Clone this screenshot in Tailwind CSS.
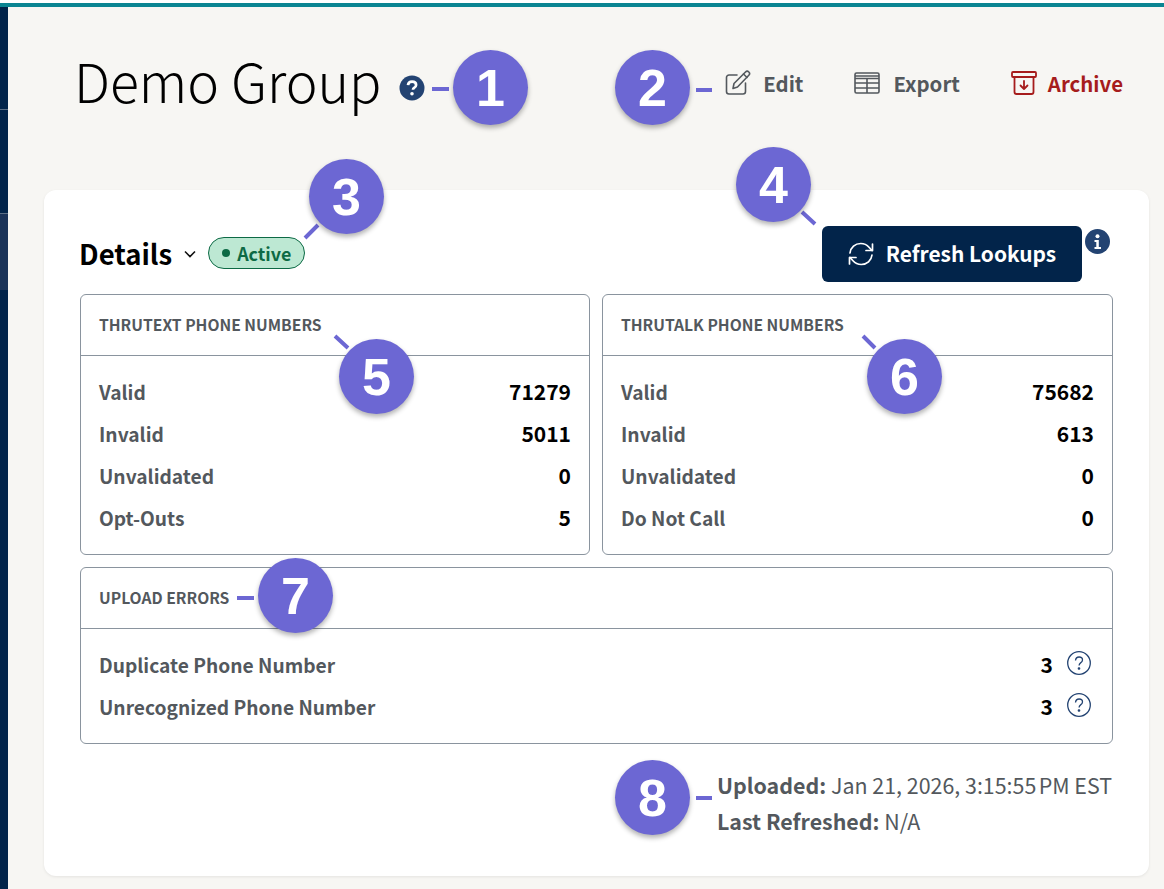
<!DOCTYPE html>
<html lang="en">
<head>
    <meta charset="UTF-8">
    <title>Demo Group</title>
    <script src="https://cdn.jsdelivr.net/npm/@tailwindcss/browser@4"></script>
</head>
<body class="bg-[#f7f6f3] font-['Noto_Sans_CJK_JP','Noto_Sans',sans-serif] antialiased">
<div class="relative w-[1164px] h-[889px] overflow-hidden">
    <div class="h-[3px] bg-white"></div>
    <div class="h-1 bg-[#0b8592]"></div>
    <div class="flex h-[882px]">
        <!-- sidebar -->
        <aside class="w-2 shrink-0 flex flex-col bg-[#02244a]">
            <div class="h-[103px] border-b border-[#5c6f86]"></div>
            <div class="h-[104px] border-b border-[#5c6f86]"></div>
            <div class="h-[76px] bg-[#1b3358]"></div>
        </aside>

        <main class="flex-1 pl-9 pr-[15px]">
            <!-- title row -->
            <div class="h-[183px] flex items-start justify-between">
                <div class="flex items-center pl-[30px] pt-[38px]">
                    <h1 class="text-[53.600px] leading-[70px] font-light text-black">Demo Group</h1>
                    <svg class="w-[26px] h-[26px] ml-[17px] mt-[16px]" viewBox="0 0 26 26">
                        <circle cx="13" cy="13" r="12.500" fill="#234372"/>
                        <path d="M9 10.200c.2-2.400 1.900-3.600 4.100-3.600 2.300 0 4 1.300 4 3.300 0 1.600-1 2.400-2 3-.9.600-1.100.9-1.100 1.800" fill="none" stroke="#fff" stroke-width="2.700"/>
                        <circle cx="13" cy="18.800" r="1.800" fill="#fff"/>
                    </svg>
                </div>
                <div class="flex items-center gap-[51px] pt-[60px] pr-[26px] text-[20.400px] leading-[32px] font-semibold">
                    <a class="flex items-center gap-[12px] text-[#53585d]">
                        <svg class="w-[26px] h-[26px]" viewBox="0 0 26 26" fill="none" stroke="#53585d" stroke-width="1.600" stroke-linecap="round" stroke-linejoin="round">
                            <path d="M12 5H4a2.500 2.500 0 0 0-2.500 2.500v14A2.500 2.500 0 0 0 4 24h14a2.500 2.500 0 0 0 2.500-2.500V13"/>
                            <path d="M8 18.500l1-5L20.500 2c1-1 2.300-1 3.300 0s1 2.300 0 3.300L12.500 17z"/>
                            <path d="M18.500 4l3.500 3.500"/>
                        </svg>
                        Edit
                    </a>
                    <a class="flex items-center gap-[13px] text-[#53585d]">
                        <svg class="w-[26px] h-[22px]" viewBox="0 0 26 22" fill="none" stroke="#53585d" stroke-width="1.600">
                            <rect x="1" y="1" width="24" height="20" rx="1.500"/>
                            <path d="M1 4h24M1 6.500h24M1 11h24M1 16h24M13 6.500V21"/>
                        </svg>
                        Export
                    </a>
                    <a class="flex items-center gap-[11px] text-[#a61c1c]">
                        <svg class="w-[26px] h-[26px]" viewBox="0 0 26 26" fill="none" stroke="#a61c1c" stroke-width="1.800" stroke-linecap="round" stroke-linejoin="round">
                            <rect x="1" y="2" width="24" height="5" rx="1"/>
                            <path d="M3.500 7v15a2 2 0 0 0 2 2h15a2 2 0 0 0 2-2V7"/>
                            <path d="M13 11v8M9.500 15.500L13 19l3.500-3.500"/>
                        </svg>
                        Archive
                    </a>
                </div>
            </div>

            <!-- details card -->
            <section class="h-[686px] bg-white rounded-xl shadow-[0_1px_3px_rgba(0,0,0,0.08)] px-9 pt-9">
                <div class="h-[68px] flex items-start justify-between">
                    <div class="flex items-center gap-3 pt-[10px]">
                        <h2 class="text-[27.500px] leading-[34px] font-semibold text-black -ml-[1px]">Details</h2>
                        <svg class="w-[12px] h-[8px] mt-[1px]" viewBox="0 0 12 8" fill="none" stroke="#111" stroke-width="1.600"><path d="M1 1.500l5 5 5-5"/></svg>
                        <span class="flex items-center gap-[7px] h-[32px] px-[13px] rounded-full bg-[#bde8d3] border border-[#0d6a45] text-[#0d6a45] text-[17.900px] font-semibold">
                            <span class="w-2 h-2 rounded-full bg-[#0d6a45]"></span>Active
                        </span>
                    </div>
                    <div class="flex items-start gap-[3px] pr-[3px]">
                        <button class="w-[260px] h-14 flex items-center justify-center gap-[12px] rounded-md bg-[#02244a] text-white text-[20.900px] font-semibold">
                            <svg class="w-[26px] h-[24px]" viewBox="0 0 26 24" fill="none" stroke="#fff" stroke-width="1.700" stroke-linecap="round" stroke-linejoin="round">
                                <path d="M2 11C2.600 5.500 7.100 1.500 12.800 1.500c3.400 0 6.200 1.400 8.200 3.700L24 8.500"/>
                                <path d="M24.500 2v6.500H18"/>
                                <path d="M24 13c-.6 5.500-5.100 9.500-10.800 9.500-3.400 0-6.200-1.400-8.200-3.700L2 15.500"/>
                                <path d="M1.500 22v-6.500H8"/>
                            </svg>
                            Refresh Lookups
                        </button>
                        <svg class="w-[25px] h-[25px] mt-[3px]" viewBox="0 0 25 25">
                            <circle cx="12.500" cy="12.500" r="12.500" fill="#234372"/>
                            <circle cx="12.500" cy="7.200" r="2" fill="#fff"/>
                            <path d="M9.500 11h4.300v7H16v2H9.500v-2h1.800v-5H9.500z" fill="#fff"/>
                        </svg>
                    </div>
                </div>

                <div class="grid grid-cols-[510px_511px] gap-3">
                    <div class="h-[261px] border border-[#8a949e] rounded-md">
                        <h3 class="h-[60px] box-content flex items-center px-[18px] text-[15.650px] font-semibold text-[#53585d] border-b border-[#8a949e]">THRUTEXT PHONE NUMBERS</h3>
                        <dl class="pt-[15px] px-[18px] text-[19.200px] font-semibold">
                            <div class="flex justify-between h-[42px] items-center"><dt class="text-[#53585d]">Valid</dt><dd class="text-black text-[21px]">71279</dd></div>
                            <div class="flex justify-between h-[42px] items-center"><dt class="text-[#53585d]">Invalid</dt><dd class="text-black text-[21px]">5011</dd></div>
                            <div class="flex justify-between h-[42px] items-center"><dt class="text-[#53585d]">Unvalidated</dt><dd class="text-black text-[21px]">0</dd></div>
                            <div class="flex justify-between h-[42px] items-center"><dt class="text-[#53585d]">Opt-Outs</dt><dd class="text-black text-[21px]">5</dd></div>
                        </dl>
                    </div>
                    <div class="h-[261px] border border-[#8a949e] rounded-md">
                        <h3 class="h-[60px] box-content flex items-center px-[18px] text-[15.650px] font-semibold text-[#53585d] border-b border-[#8a949e]">THRUTALK PHONE NUMBERS</h3>
                        <dl class="pt-[15px] px-[18px] text-[19.200px] font-semibold">
                            <div class="flex justify-between h-[42px] items-center"><dt class="text-[#53585d]">Valid</dt><dd class="text-black text-[21px]">75682</dd></div>
                            <div class="flex justify-between h-[42px] items-center"><dt class="text-[#53585d]">Invalid</dt><dd class="text-black text-[21px]">613</dd></div>
                            <div class="flex justify-between h-[42px] items-center"><dt class="text-[#53585d]">Unvalidated</dt><dd class="text-black text-[21px]">0</dd></div>
                            <div class="flex justify-between h-[42px] items-center"><dt class="text-[#53585d]">Do Not Call</dt><dd class="text-black text-[21px]">0</dd></div>
                        </dl>
                    </div>
                </div>

                <div class="mt-3 h-[177px] border border-[#8a949e] rounded-md">
                    <h3 class="h-[60px] box-content flex items-center px-[18px] text-[15.650px] font-semibold text-[#53585d] border-b border-[#8a949e]">UPLOAD ERRORS</h3>
                    <dl class="pt-[15px] pl-[18px] pr-[21px] text-[19.200px] font-semibold">
                        <div class="flex justify-between h-[42px] items-center">
                            <dt class="text-[#53585d]">Duplicate Phone Number</dt>
                            <dd class="flex items-center gap-[14px] text-black text-[21px]">3
                                <svg class="w-[24px] h-[24px] -mt-[5px]" viewBox="0 0 24 24" fill="none" stroke="#234372" stroke-width="1.300"><circle cx="12" cy="12" r="11.300"/><path d="M8.500 9.500C8.700 7.300 10.100 6 12.100 6c2 0 3.400 1.200 3.400 3 0 1.500-.9 2.200-1.900 2.900-1 .7-1.500 1.300-1.500 2.600"/><circle cx="12" cy="17.500" r=".7" fill="#234372"/></svg>
                            </dd>
                        </div>
                        <div class="flex justify-between h-[42px] items-center">
                            <dt class="text-[#53585d]">Unrecognized Phone Number</dt>
                            <dd class="flex items-center gap-[14px] text-black text-[21px]">3
                                <svg class="w-[24px] h-[24px] -mt-[5px]" viewBox="0 0 24 24" fill="none" stroke="#234372" stroke-width="1.300"><circle cx="12" cy="12" r="11.300"/><path d="M8.500 9.500C8.700 7.300 10.100 6 12.100 6c2 0 3.400 1.200 3.400 3 0 1.500-.9 2.200-1.900 2.900-1 .7-1.500 1.300-1.500 2.600"/><circle cx="12" cy="17.500" r=".7" fill="#234372"/></svg>
                            </dd>
                        </div>
                    </dl>
                </div>

                <div class="mt-[23px] ml-auto w-[396px] text-[21.400px] leading-9 text-[#53585d]">
                    <p class="whitespace-nowrap"><strong class="font-semibold">Uploaded:</strong> Jan 21, 2026, 3:15:55&#8239;PM EST</p>
                    <p><strong class="font-semibold">Last Refreshed:</strong> N/A</p>
                </div>
            </section>
        </main>
    </div>

    <!-- callout connectors -->
    <svg class="absolute inset-0 w-[1164px] h-[889px] pointer-events-none" viewBox="0 0 1164 889" fill="none" stroke="#6c67d3" stroke-width="4">
        <path d="M432 89h17M696 90h16M305 238l13-13M802 212l13 12M335 336l13 12M863 336l12 12M237 598h17M696 798h16"/>
    </svg>

    <!-- numbered callouts -->
    <div class="absolute left-[453px] top-[50px] w-[75px] h-[75px] rounded-full bg-[#6c67d3] shadow-[0_3px_5px_rgba(0,0,0,0.3)] flex items-center justify-center text-white text-[52px] font-bold font-['Liberation_Sans',sans-serif]">1</div>
    <div class="absolute left-[615px] top-[50px] w-[75px] h-[75px] rounded-full bg-[#6c67d3] shadow-[0_3px_5px_rgba(0,0,0,0.3)] flex items-center justify-center text-white text-[52px] font-bold font-['Liberation_Sans',sans-serif]">2</div>
    <div class="absolute left-[309px] top-[159px] w-[75px] h-[75px] rounded-full bg-[#6c67d3] shadow-[0_3px_5px_rgba(0,0,0,0.3)] flex items-center justify-center text-white text-[52px] font-bold font-['Liberation_Sans',sans-serif]">3</div>
    <div class="absolute left-[736px] top-[147px] w-[75px] h-[75px] rounded-full bg-[#6c67d3] shadow-[0_3px_5px_rgba(0,0,0,0.3)] flex items-center justify-center text-white text-[52px] font-bold font-['Liberation_Sans',sans-serif]">4</div>
    <div class="absolute left-[339px] top-[339px] w-[75px] h-[75px] rounded-full bg-[#6c67d3] shadow-[0_3px_5px_rgba(0,0,0,0.3)] flex items-center justify-center text-white text-[52px] font-bold font-['Liberation_Sans',sans-serif]">5</div>
    <div class="absolute left-[867px] top-[339px] w-[75px] h-[75px] rounded-full bg-[#6c67d3] shadow-[0_3px_5px_rgba(0,0,0,0.3)] flex items-center justify-center text-white text-[52px] font-bold font-['Liberation_Sans',sans-serif]">6</div>
    <div class="absolute left-[258px] top-[558px] w-[75px] h-[75px] rounded-full bg-[#6c67d3] shadow-[0_3px_5px_rgba(0,0,0,0.3)] flex items-center justify-center text-white text-[52px] font-bold font-['Liberation_Sans',sans-serif]">7</div>
    <div class="absolute left-[615px] top-[760px] w-[75px] h-[75px] rounded-full bg-[#6c67d3] shadow-[0_3px_5px_rgba(0,0,0,0.3)] flex items-center justify-center text-white text-[52px] font-bold font-['Liberation_Sans',sans-serif]">8</div>
</div>
</body>
</html>
